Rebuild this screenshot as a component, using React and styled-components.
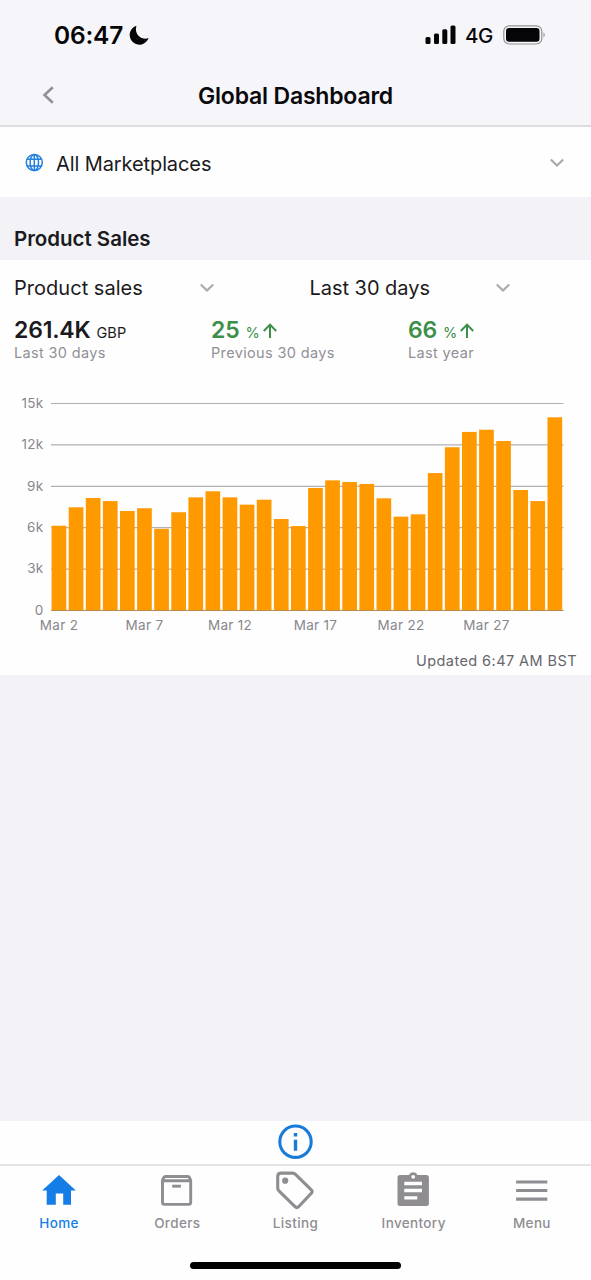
import React from 'react';
import styled, { createGlobalStyle } from 'styled-components';

const GlobalStyle = createGlobalStyle`
  *, *::before, *::after { box-sizing: border-box; }
  body { margin: 0; background: #fefefe; }
  svg { display: block; flex: none; }
`;

const Screen = styled.div`
  display: flex;
  flex-direction: column;
  width: 591px;
  height: 1280px;
  overflow: hidden;
  background: #f2f2f7;
  color: #1b1a20;
  font-family: Inter, 'Liberation Sans', sans-serif;
`;

const Header = styled.header`
  height: 127px;
  flex: none;
  background: #f6f5f9;
  border-bottom: 2px solid #dddce1;
`;

const StatusBar = styled.div`
  display: flex;
  align-items: center;
  height: 70px;
  padding: 0 45px 0 54px;
  color: #050507;
`;

const Clock = styled.span`
  font-size: 24.5px;
  font-weight: 600;
  letter-spacing: -0.2px;
  width: 75px;
  white-space: nowrap;
`;

const StatusRight = styled.div`
  display: flex;
  align-items: center;
  margin-left: auto;
`;

const Network = styled.span`
  width: 38px;
  margin-left: 9px;
  font-size: 20.5px;
  font-weight: 450;
  letter-spacing: -0.4px;
`;

const TitleBar = styled.div`
  display: grid;
  grid-template-columns: 96px 1fr 96px;
  align-items: center;
  height: 51px;
`;

const BackButton = styled.button`
  display: flex;
  padding: 0 0 2px 42px;
  border: 0;
  background: none;
`;

const Title = styled.h1`
  margin: 0;
  text-align: center;
  color: #09090c;
  font-size: 23px;
  font-weight: 600;
  letter-spacing: -0.2px;
`;

const Marketplace = styled.div`
  display: flex;
  align-items: center;
  height: 70px;
  flex: none;
  padding: 1px 27px 0 25px;
  background: #fefefe;
`;

const SelectLabel = styled.span`
  font-size: 20px;
  line-height: 26px;
  letter-spacing: ${(p) => p.$spacing || '0'};
  margin-left: ${(p) => p.$indent || 0};
  margin-right: auto;
  padding-top: ${(p) => p.$drop || 0};
  white-space: nowrap;
`;

const SectionTitle = styled.h2`
  height: 63px;
  flex: none;
  margin: 0;
  padding: 28px 14px 0;
  font-size: 20.5px;
  line-height: 27px;
  font-weight: 600;
  letter-spacing: -0.03px;
`;

const Card = styled.section`
  height: 415px;
  flex: none;
  background: #fefefe;
`;

const Filters = styled.div`
  display: grid;
  grid-template-columns: 1fr 1fr;
  height: 54px;
`;

const Filter = styled.div`
  display: flex;
  align-items: center;
  padding: 1px 81.5px 0 14px;
`;

const Metrics = styled.div`
  display: grid;
  grid-template-columns: repeat(3, 197px);
  height: 72px;
`;

const Metric = styled.div`
  padding: 2px 0 0 14px;
  color: ${(p) => (p.$positive ? '#3c8f49' : '#1b1a20')};
`;

const Figure = styled.div`
  display: flex;
  align-items: baseline;
  height: 28px;
  line-height: 29px;
`;

const Value = styled.strong`
  font-size: 23px;
  font-weight: 600;
  letter-spacing: -0.2px;
`;

const Unit = styled.span`
  margin: 0 3px 0 6px;
  font-size: 14.5px;
  letter-spacing: 0.15px;
`;

const Caption = styled.div`
  color: #928f96;
  font-size: 14.5px;
  line-height: 18px;
  letter-spacing: 0.35px;
  white-space: nowrap;
`;

const ChartSvg = styled.svg`
  text {
    font-family: Inter, 'Liberation Sans', sans-serif;
    font-size: 13.5px;
    letter-spacing: 0.3px;
    fill: #88868d;
  }
`;

const Updated = styled.div`
  padding: 0 14px;
  text-align: right;
  color: #67656c;
  font-size: 14.5px;
  line-height: 20px;
  letter-spacing: 0.43px;
`;

const Spacer = styled.div`
  flex: 1;
`;

const InfoBar = styled.div`
  display: flex;
  justify-content: center;
  height: 43px;
  flex: none;
  background: #fefefe;
`;

const TabBar = styled.nav`
  display: grid;
  grid-template-columns: repeat(5, 1fr);
  height: 98px;
  flex: none;
  padding-top: 4px;
  border-top: 2px solid #e4e3e7;
  background: #fefefe;
`;

const Tab = styled.a`
  display: flex;
  flex-direction: column;
  align-items: center;
  color: ${(p) => (p.$active ? '#157ee6' : '#8f8d91')};
  font-size: 13.5px;
  font-weight: 500;
  line-height: 26px;
  letter-spacing: 0.36px;
`;

const HomeIndicator = styled.div`
  height: 18px;
  flex: none;
  background: #fefefe;

  &::before {
    content: '';
    display: block;
    width: 211px;
    height: 7px;
    margin: 0 auto;
    border-radius: 4px;
    background: #000;
  }
`;

const ChevronDown = () => (
  <svg width="14" height="10" viewBox="0 0 14 10" fill="none" stroke="#aaa9ad" strokeWidth="2.2">
    <path d="M.8 1.5 7 7.5l6.2-6" />
  </svg>
);

const ArrowUp = () => (
  <svg width="14" height="15" viewBox="0 0 14 15" fill="none" stroke="currentColor" strokeWidth="2">
    <path d="M7 15V1.8M.8 8 7 1.6 13.2 8" />
  </svg>
);

const Globe = () => (
  <svg width="19" height="19" viewBox="0 0 19 19" fill="none" stroke="#2380dc" strokeWidth="1.5">
    <circle cx="9.3" cy="9.5" r="8" />
    <ellipse cx="9.3" cy="9.5" rx="4.2" ry="8" />
    <path d="M9.3 1.5v16M2.1 6.300h14.400M2.1 12.900h14.400" />
  </svg>
);

const icons = {
  Home: <path fill="currentColor" d="M20 5 36.8 20.5H32v14.2h-7.8V23.5h-7.4v11.2H7.700V20.5H3.200z" />,
  Orders: (
    <g fill="none" stroke="currentColor" strokeWidth="2.9" strokeLinejoin="round">
      <path d="M5.5 10.6 6.7 7.6Q7.2 6.5 8.4 6.5H30.8Q32 6.5 32.5 7.6L33.7 10.6" />
      <path d="M5.5 10.8H33.7V32.3Q33.7 34.4 31.6 34.4H7.6Q5.5 34.4 5.5 32.3z" />
      <path d="M15.2 16.2h8.7" />
    </g>
  ),
  Listing: (
    <g fill="none" stroke="currentColor" strokeWidth="3.1">
      <path d="M6 3.1h11.6q1.7 0 2.9 1.2l15.8 15.6q1.7 1.7 0 3.4L23.6 36.7q-1.8 1.8-3.6 0L3.9 20.8q-1.2-1.2-1.2-2.8V6.4Q2.7 3.1 6 3.1z" />
      <circle cx="10.2" cy="10.7" r="3.1" fill="currentColor" stroke="none" />
    </g>
  ),
  Inventory: (
    <g>
      <path fill="currentColor" d="M6 5h9.1a4.4 4.4 0 0 1 8.2 0h9.1a2.5 2.5 0 0 1 2.5 2.5v26A2.5 2.5 0 0 1 32.4 36H6a2.5 2.5 0 0 1-2.5-2.5v-26A2.5 2.5 0 0 1 6 5z" />
      <circle cx="19.2" cy="6.8" r="1.9" fill="#fefefe" />
      <path stroke="#fefefe" strokeWidth="3.3" d="M10.3 13.5H28M10.3 20.5H28M10.3 27.9h13" />
    </g>
  ),
  Menu: <path stroke="currentColor" strokeWidth="3.2" d="M4.1 12h31.2M4.1 20.5h31.2M4.1 29.1h31.2" />,
};

const CHART_TOP = 386;
const BASE = 610.5;
const PX_PER_K = 13.8;
const sales = [
  6.14, 7.48, 8.15, 7.93, 7.21, 7.41, 5.92, 7.12, 8.2, 8.64, 8.2, 7.67, 8.03, 6.63, 6.12,
  8.88, 9.43, 9.31, 9.17, 8.13, 6.8, 6.97, 9.96, 11.83, 12.94, 13.1, 12.28, 8.73, 7.93, 14,
];
const axisMarks = [15, 12, 9, 6, 3, 0];
const dateLabels = ['Mar 2', 'Mar 7', 'Mar 12', 'Mar 17', 'Mar 22', 'Mar 27'];

const SalesChart = () => (
  <ChartSvg width="591" height="265" viewBox={`0 ${CHART_TOP} 591 265`}>
    {axisMarks.map((k) => {
      const y = BASE - k * PX_PER_K;
      return (
        <g key={k}>
          <path d={`M51 ${y}H563.5`} stroke="#b1b0b5" strokeWidth="1.2" />
          <text x="43.5" y={y + 4.2} textAnchor="end">{k ? `${k}k` : '0'}</text>
        </g>
      );
    })}
    {sales.map((k, i) => (
      <rect key={i} x={51.6 + i * 17.1} y={BASE - k * PX_PER_K} width="14.7" height={k * PX_PER_K} fill="#ff9900" />
    ))}
    <path d={`M51 ${BASE}H563.5`} stroke="#b98c4c" strokeWidth="1" />
    {dateLabels.map((label, i) => (
      <text key={label} x={59 + i * 85.5} y="630" textAnchor="middle">{label}</text>
    ))}
  </ChartSvg>
);

export default function App() {
  return (
    <Screen>
      <GlobalStyle />
      <Header>
        <StatusBar>
          <Clock>06:47</Clock>
          <svg width="20" height="20" viewBox="0 0 20 20">
            <path fill="currentColor" d="M7.5 .7A9.7 9.7 0 1 0 19.6 13C13 15.8 4.6 9.5 7.5 .7z" />
          </svg>
          <StatusRight>
            <svg width="31" height="20" viewBox="0 0 31 20" fill="currentColor">
              <rect x=".5" y="12" width="5" height="7" rx="1.5" />
              <rect x="9" y="8.5" width="5" height="10.5" rx="1.5" />
              <rect x="17.3" y="4.3" width="5" height="14.7" rx="1.5" />
              <rect x="25.5" y=".5" width="5" height="18.5" rx="1.5" />
            </svg>
            <Network>4G</Network>
            <svg width="43" height="20" viewBox="0 0 43 20">
              <rect x=".8" y=".8" width="38" height="18.2" rx="5.5" fill="none" stroke="#929196" strokeWidth="1.2" />
              <rect x="3" y="3" width="33.5" height="13.8" rx="3" fill="currentColor" />
              <path d="M40.5 7q2.5 2.8 0 5.6z" fill="#929196" />
            </svg>
          </StatusRight>
        </StatusBar>
        <TitleBar>
          <BackButton aria-label="Back">
            <svg width="13" height="18" viewBox="0 0 13 18" fill="none" stroke="#919095" strokeWidth="2.6">
              <path d="M10.8 1.3 2.5 9l8.3 7.7" />
            </svg>
          </BackButton>
          <Title>Global Dashboard</Title>
        </TitleBar>
      </Header>
      <Marketplace>
        <Globe />
        <SelectLabel $indent="12px" $spacing="-0.1px" $drop="2px">All Marketplaces</SelectLabel>
        <ChevronDown />
      </Marketplace>
      <SectionTitle>Product Sales</SectionTitle>
      <Card>
        <Filters>
          <Filter>
            <SelectLabel $spacing="0.03px">Product sales</SelectLabel>
            <ChevronDown />
          </Filter>
          <Filter>
            <SelectLabel $spacing="-0.03px">Last 30 days</SelectLabel>
            <ChevronDown />
          </Filter>
        </Filters>
        <Metrics>
          <Metric>
            <Figure><Value>261.4K</Value><Unit>GBP</Unit></Figure>
            <Caption>Last 30 days</Caption>
          </Metric>
          <Metric $positive>
            <Figure><Value>25</Value><Unit>%</Unit><ArrowUp /></Figure>
            <Caption>Previous 30 days</Caption>
          </Metric>
          <Metric $positive>
            <Figure><Value>66</Value><Unit>%</Unit><ArrowUp /></Figure>
            <Caption>Last year</Caption>
          </Metric>
        </Metrics>
        <SalesChart />
        <Updated>Updated 6:47 AM BST</Updated>
      </Card>
      <Spacer />
      <InfoBar>
        <svg width="37" height="40" viewBox="0 0 37 40">
          <circle cx="18.5" cy="20.7" r="15.7" fill="none" stroke="#187bd9" strokeWidth="3.1" />
          <path stroke="#187bd9" strokeWidth="3.4" d="M18.5 12v3.4M18.5 18.8v11" />
        </svg>
      </InfoBar>
      <TabBar>
        {Object.entries(icons).map(([name, icon]) => (
          <Tab key={name} $active={name === 'Home'}>
            <svg width="40" height="40" viewBox="0 0 40 40">{icon}</svg>
            {name}
          </Tab>
        ))}
      </TabBar>
      <HomeIndicator />
    </Screen>
  );
}
